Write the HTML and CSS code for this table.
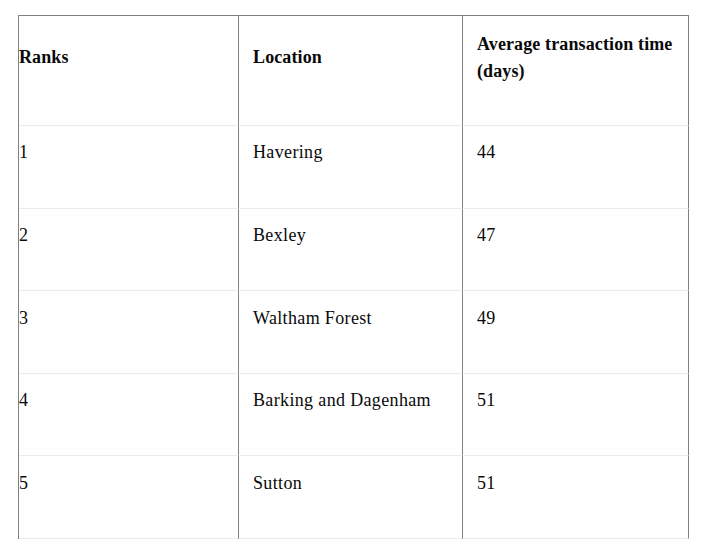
FILE: index.html
```html
<!DOCTYPE html>
<html lang="en">
<head>
<meta charset="utf-8">
<title>Average transaction time</title>
<link rel="stylesheet" href="styles.css">
</head>
<body>
<table class="rank-table">
  <colgroup>
    <col class="col-rank">
    <col class="col-loc">
    <col class="col-time">
  </colgroup>
  <thead>
    <tr>
      <th>Ranks</th>
      <th>Location</th>
      <th>Average transaction time (days)</th>
    </tr>
  </thead>
  <tbody>
    <tr><td>1</td><td>Havering</td><td>44</td></tr>
    <tr><td>2</td><td>Bexley</td><td>47</td></tr>
    <tr><td>3</td><td>Waltham Forest</td><td>49</td></tr>
    <tr><td>4</td><td>Barking and Dagenham</td><td>51</td></tr>
    <tr><td>5</td><td>Sutton</td><td>51</td></tr>
  </tbody>
</table>
</body>
</html>
```
FILE: styles.css
```css
html, body {
  margin: 0;
  padding: 0;
  background: #fff;
}

body {
  padding: 15px 0 0 18px;
  font-family: "Liberation Serif", "Times New Roman", serif;
  font-size: 18px;
  line-height: 27px;
  color: #0a0a0a;
}

.rank-table {
  border-collapse: separate;
  border-spacing: 0;
  table-layout: fixed;
  width: 670px;
  border-top: 1px solid #808080;
  border-left: 1px solid #808080;
}

.col-rank { width: 220px; }
.col-loc { width: 224px; }
.col-time { width: 226px; }

.rank-table th,
.rank-table td {
  text-align: left;
  border-right: 1px solid #808080;
  border-bottom: 1px solid #ebebeb;
  padding-left: 14px;
  padding-right: 8px;
}

.rank-table th:first-child,
.rank-table td:first-child {
  padding-left: 0;
}

.rank-table th {
  font-weight: 700;
  letter-spacing: 0.12px;
  vertical-align: middle;
  padding-top: 14.5px;
  padding-bottom: 40.5px;
}

.rank-table td {
  font-weight: 400;
  letter-spacing: 0.35px;
  vertical-align: top;
  padding-top: 13.4px;
  padding-bottom: 41.2px;
}
```
